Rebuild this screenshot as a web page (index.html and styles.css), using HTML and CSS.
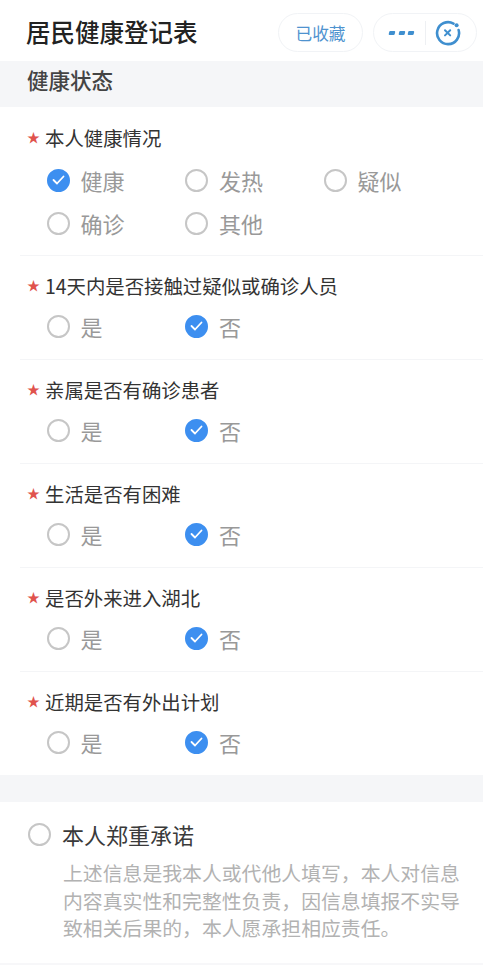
FILE: index.html
```html
<!DOCTYPE html>
<html lang="zh-CN">
  <head>
    <meta charset="UTF-8" />
    <meta name="viewport" content="width=device-width, initial-scale=1.0" />
    <title>居民健康登记表</title>
    <link rel="stylesheet" href="styles.css">
  </head>
  <body>
    <header class="top-bar">
      <h1>居民健康登记表</h1>
      <button class="pill fav-button">已收藏</button>
      <div class="pill capsule">
        <span class="dots"><i></i><i></i><i></i></span>
        <span class="capsule-line"></span>
        <svg class="close-icon" width="26" height="26" viewBox="0 0 26 26" fill="none" stroke="#3f8fcf">
          <path d="M18.5 3.6A11 11 0 1 0 23.6 10" stroke-width="2.6" stroke-linecap="round" />
          <circle cx="21.6" cy="5.2" r="2" fill="#3f8fcf" stroke="none" />
          <path d="M10 10.2l5.2 5.2M15.2 10.2L10 15.4" stroke-width="2" stroke-linecap="round" />
        </svg>
      </div>
    </header>

    <h2 class="section-title">健康状态</h2>

    <div class="question">
      <p class="question-label"><span class="star">★</span>本人健康情况</p>
      <div class="options">
        <span class="option"><span class="radio checked"><svg width="13" height="10" viewBox="0 0 13 10"><path d="M1.5 5l3.5 3.5 6.5-7" /></svg></span>健康</span>
        <span class="option"><span class="radio"></span>发热</span>
        <span class="option"><span class="radio"></span>疑似</span>
        <span class="option"><span class="radio"></span>确诊</span>
        <span class="option"><span class="radio"></span>其他</span>
      </div>
    </div>

    <div class="question">
      <p class="question-label"><span class="star">★</span>14天内是否接触过疑似或确诊人员</p>
      <div class="options">
        <span class="option"><span class="radio"></span>是</span>
        <span class="option"><span class="radio checked"><svg width="13" height="10" viewBox="0 0 13 10"><path d="M1.5 5l3.5 3.5 6.5-7" /></svg></span>否</span>
      </div>
    </div>

    <div class="question">
      <p class="question-label"><span class="star">★</span>亲属是否有确诊患者</p>
      <div class="options">
        <span class="option"><span class="radio"></span>是</span>
        <span class="option"><span class="radio checked"><svg width="13" height="10" viewBox="0 0 13 10"><path d="M1.5 5l3.5 3.5 6.5-7" /></svg></span>否</span>
      </div>
    </div>

    <div class="question">
      <p class="question-label"><span class="star">★</span>生活是否有困难</p>
      <div class="options">
        <span class="option"><span class="radio"></span>是</span>
        <span class="option"><span class="radio checked"><svg width="13" height="10" viewBox="0 0 13 10"><path d="M1.5 5l3.5 3.5 6.5-7" /></svg></span>否</span>
      </div>
    </div>

    <div class="question">
      <p class="question-label"><span class="star">★</span>是否外来进入湖北</p>
      <div class="options">
        <span class="option"><span class="radio"></span>是</span>
        <span class="option"><span class="radio checked"><svg width="13" height="10" viewBox="0 0 13 10"><path d="M1.5 5l3.5 3.5 6.5-7" /></svg></span>否</span>
      </div>
    </div>

    <div class="question">
      <p class="question-label"><span class="star">★</span>近期是否有外出计划</p>
      <div class="options">
        <span class="option"><span class="radio"></span>是</span>
        <span class="option"><span class="radio checked"><svg width="13" height="10" viewBox="0 0 13 10"><path d="M1.5 5l3.5 3.5 6.5-7" /></svg></span>否</span>
      </div>
    </div>

    <div class="band"></div>

    <section class="promise">
      <div class="promise-head"><span class="radio"></span>本人郑重承诺</div>
      <p class="promise-text">上述信息是我本人或代他人填写，本人对信息内容真实性和完整性负责，因信息填报不实导致相关后果的，本人愿承担相应责任。</p>
    </section>
    <div class="band-end"></div>
  </body>
</html>
```

FILE: styles.css
```css
* {
  box-sizing: border-box;
}

html,
body {
  height: 965px;
  overflow: hidden;
}

body {
  margin: 0;
  background-color: #fff;
  color: #333;
  font-family: "Noto Sans CJK SC", "Noto Sans", sans-serif;
}

.top-bar {
  height: 61px;
  padding: 13px 6px 0 26px;
  display: flex;
  align-items: flex-start;
}

.top-bar h1 {
  margin: 0 auto 0 0;
  font-size: 24.5px;
  line-height: 38px;
  font-weight: 500;
  color: #222;
}

.pill {
  height: 39px;
  border: 1px solid #f1f3f6;
  border-radius: 20px;
  background: #fff;
}

.fav-button {
  width: 85px;
  margin-right: 10px;
  padding: 0;
  font-family: inherit;
  font-size: 16.7px;
  color: #4f93cf;
}

.capsule {
  width: 104px;
  padding-left: 15px;
  display: flex;
  align-items: center;
}

.dots {
  display: flex;
  gap: 4px;
}

.dots i {
  width: 5.5px;
  height: 3.5px;
  background: #3f8fcf;
  border-radius: 1px;
  transform: skewX(-12deg);
}

.capsule-line {
  width: 1px;
  height: 24px;
  margin: 0 9px 0 11px;
  background: #eef0f3;
}

.section-title {
  margin: 0;
  height: 46px;
  padding-left: 27px;
  background: #f5f6f8;
  font-size: 21.5px;
  line-height: 38px;
  font-weight: 500;
  color: #444;
}

.question {
  margin-left: 20px;
  padding: 14px 0 0 7px;
  border-bottom: 1px solid #f4f5f7;
  height: 104px;
}

.question:first-of-type {
  height: 149px;
  padding-top: 15px;
}

.question:first-of-type .options {
  margin-top: 13px;
}

.question-label {
  margin: 0;
  display: flex;
  align-items: center;
  height: 30px;
  font-size: 19.4px;
  color: #333;
}

.star {
  width: 18px;
  color: #e0534d;
  font-size: 13px;
  line-height: 30px;
}

.options {
  margin-top: 11px;
  padding-left: 19.5px;
  display: grid;
  grid-template-columns: repeat(3, 138.5px);
  row-gap: 13px;
}

.option {
  height: 30px;
  display: flex;
  align-items: center;
  gap: 11px;
  font-size: 22px;
  color: #999;
}

.radio {
  flex: none;
  width: 23px;
  height: 23px;
  border: 2px solid #c6c6c6;
  border-radius: 50%;
  display: flex;
  align-items: center;
  justify-content: center;
}

.radio.checked {
  border-color: #3d8ff0;
  background: #3d8ff0;
}

.radio svg {
  fill: none;
  stroke: #fff;
  stroke-width: 1.8;
  stroke-linecap: round;
  stroke-linejoin: round;
}

.band {
  height: 27px;
  margin-top: -1px;
  background: #f5f6f8;
}

.promise {
  height: 161px;
  padding: 17px 22px 0 28px;
}

.promise-head {
  height: 30px;
  display: flex;
  align-items: center;
  gap: 11px;
  font-size: 22px;
  color: #3a3a3a;
}

.promise-text {
  margin: 10px 0 0 35px;
  font-size: 19.85px;
  line-height: 27.5px;
  color: #b2b2b2;
}

.band-end {
  height: 2px;
  background: #f7f7f9;
}
```
